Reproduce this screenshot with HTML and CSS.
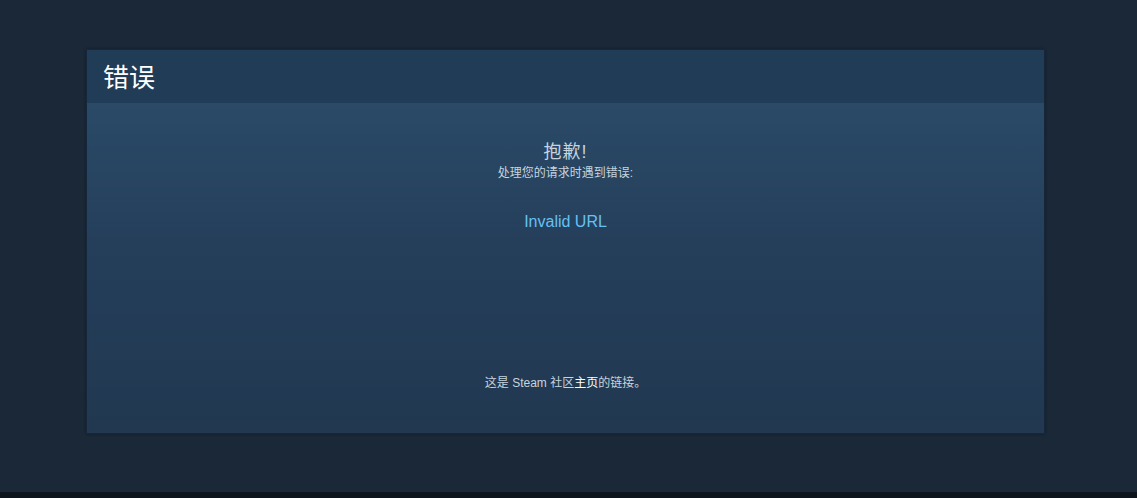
FILE: index.html
```html
<!DOCTYPE html>
<html lang="zh-CN">
<head>
    <meta charset="UTF-8">
    <title>错误</title>
    <link rel="stylesheet" href="styles.css">
</head>
<body>
    <div class="page">
        <div class="error-box">
            <div class="error-header">
                <h1>错误</h1>
            </div>
            <div class="error-body">
                <h3>抱歉!</h3>
                <p class="sub">处理您的请求时遇到错误:</p>
                <p class="message">Invalid URL</p>
                <p class="footer-note">这是 Steam 社区<a href="#">主页</a>的链接。</p>
            </div>
        </div>
    </div>
    <div class="bottom-bar"></div>
</body>
</html>
```

FILE: styles.css
```css
* {
    margin: 0;
    padding: 0;
    box-sizing: border-box;
}

body {
    background: #1b2838;
    font-family: "Liberation Sans", Arial, "Noto Sans CJK SC", sans-serif;
    color: #c6d4df;
    height: 498px;
    display: flex;
    flex-direction: column;
}

.page {
    flex: 1;
    padding: 49px 92px 0 86px;
}

.error-box {
    width: 959px;
    border: 1px solid #17273a;
    box-shadow: 0 0 3px rgba(0,0,0,0.3);
}

.error-header {
    background: #213c57;
    height: 53px;
    padding: 11px 16px 0 16px;
}

.error-header h1 {
    font-size: 26px;
    font-weight: normal;
    color: #ffffff;
    line-height: 34px;
}

.error-body {
    background: linear-gradient(to bottom, #2a4a67 0%, #243d59 50%, #213850 100%);
    height: 330px;
    text-align: center;
    padding-top: 38px;
}

.error-body h3 {
    font-size: 18px;
    font-weight: normal;
    line-height: 22px;
    color: #c6d4df;
    letter-spacing: 1px;
}

.sub {
    margin-top: 3px;
    font-size: 12px;
    line-height: 15px;
}

.message {
    margin-top: 31px;
    font-size: 16px;
    line-height: 20px;
    color: #66c0f4;
}

.footer-note {
    margin-top: 143px;
    font-size: 12px;
    line-height: 16px;
}

.footer-note a {
    color: #ffffff;
    text-decoration: none;
}

.bottom-bar {
    height: 6px;
    background: #0e141b;
}
```
